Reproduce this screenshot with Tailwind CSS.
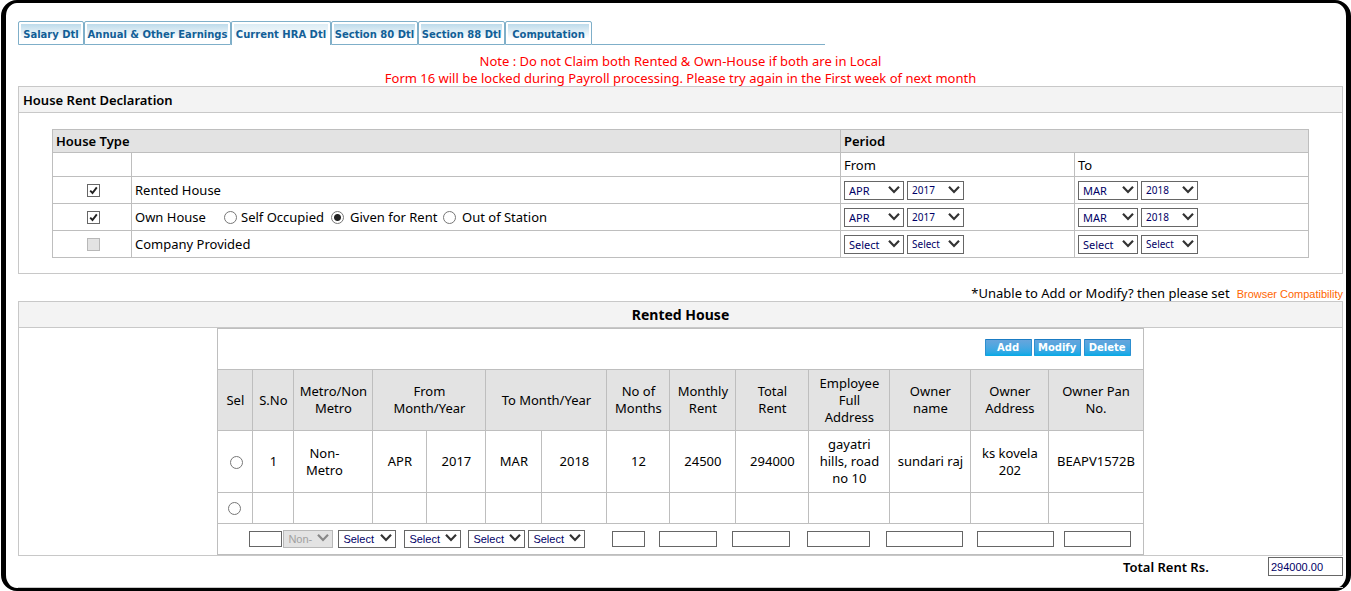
<!DOCTYPE html>
<html lang="en">
<head>
<meta charset="utf-8">
<meta name="viewport" content="width=device-width, initial-scale=1">
<title>House Rent Declaration</title>
<script src="https://cdn.jsdelivr.net/npm/@tailwindcss/browser@4"></script>
</head>
<body class="min-h-screen bg-white font-['Noto_Sans',sans-serif] text-[13px] leading-[17px] text-black">
<svg class="hidden">
  <symbol id="chev" viewBox="0 0 12 8"><path d="M1 0.8 6 6 11 0.8" fill="none" stroke="currentColor" stroke-width="2.2"/></symbol>
  <symbol id="tick" viewBox="0 0 9 9"><path d="M1.2 4.6 3.5 7 7.8 1.4" fill="none" stroke="currentColor" stroke-width="1.9"/></symbol>
</svg>
<main class="ml-px flex min-h-[591px] flex-col rounded-[16px] border-x-5 border-y-3 border-black pt-[18px] pr-[3px] pl-3">

  <nav class="flex h-6 w-[807px] font-['DejaVu_Sans',sans-serif] text-[10px] font-bold text-[#125f97]">
    <a href="#" class="flex w-[66px] items-center justify-center rounded-t-xs border border-[#7fafc9] bg-linear-to-b from-[#b4d6e8] to-white to-75% pt-0.5 whitespace-nowrap ring-2 ring-white ring-inset">Salary Dtl</a>
    <a href="#" class="flex w-[147px] items-center justify-center rounded-t-xs border border-[#7fafc9] bg-linear-to-b from-[#b4d6e8] to-white to-75% pt-0.5 whitespace-nowrap ring-2 ring-white ring-inset">Annual &amp; Other Earnings</a>
    <a href="#" aria-current="page" class="flex w-[100px] items-center justify-center rounded-t-xs border border-b-0 border-[#7fafc9] bg-linear-to-b from-[#d8eaf3] to-white to-75% pt-0.5 whitespace-nowrap ring-2 ring-white ring-inset">Current HRA Dtl</a>
    <a href="#" class="flex w-[87px] items-center justify-center rounded-t-xs border border-[#7fafc9] bg-linear-to-b from-[#b4d6e8] to-white to-75% pt-0.5 whitespace-nowrap ring-2 ring-white ring-inset">Section 80 Dtl</a>
    <a href="#" class="flex w-[87px] items-center justify-center rounded-t-xs border border-[#7fafc9] bg-linear-to-b from-[#b4d6e8] to-white to-75% pt-0.5 whitespace-nowrap ring-2 ring-white ring-inset">Section 88 Dtl</a>
    <a href="#" class="flex w-[87px] items-center justify-center rounded-t-xs border border-[#7fafc9] bg-linear-to-b from-[#b4d6e8] to-white to-75% pt-0.5 whitespace-nowrap ring-2 ring-white ring-inset">Computation</a>
    <span class="flex-1 border-b border-[#7fafc9]"></span>
  </nav>

  <div class="pt-2 text-center text-[#ff0000]">
    <p>Note : Do not Claim both Rented &amp; Own-House if both are in Local</p>
    <p class="-mb-px">Form 16 will be locked during Payroll processing. Please try again in the First week of next month</p>
  </div>

  <section class="border border-[#c8c8c8] pb-[15px]">
    <h2 class="h-[26px] border-b border-[#c8c8c8] bg-[#f3f3f3] pl-1 leading-[26px] font-semibold">House Rent Declaration</h2>
    <div class="px-[33px] pt-4">
      <table class="w-full table-fixed border-collapse text-left [&_td]:border [&_td]:border-[#bebebe] [&_td]:p-0 [&_td]:pl-[3px] [&_th]:border [&_th]:border-[#bebebe] [&_th]:p-0 [&_th]:pl-[3px]">
        <colgroup><col class="w-[79px]"><col><col class="w-[234px]"><col class="w-[234px]"></colgroup>
        <tr class="h-[23px] bg-[#e3e3e3]"><th colspan="2" class="font-semibold">House Type</th><th colspan="2" class="font-semibold">Period</th></tr>
        <tr class="h-6"><td></td><td></td><td><div class="pt-0.5">From</div></td><td><div class="pt-0.5">To</div></td></tr>
        <tr class="h-[27px]">
          <td class="pr-0.5"><span class="relative mx-auto block size-[13px]"><input id="rented" type="checkbox" checked class="block size-[13px] appearance-none border border-[#666] bg-white"><svg class="pointer-events-none absolute top-0.5 left-0.5 size-[9px] text-[#222]"><use href="#tick"/></svg></span></td>
          <td><label for="rented">Rented House</label></td>
          <td><div class="flex gap-[3px]">
            <span class="relative text-[#333]"><select aria-label="Rented from month" class="block h-[19px] w-[60px] appearance-none border border-[#666] bg-white pl-1 text-[11px] leading-[17px] text-[#000066]"><option>APR</option></select><svg class="pointer-events-none absolute top-[5px] right-1 h-2 w-3"><use href="#chev"/></svg></span>
            <span class="relative text-[#333]"><select aria-label="Rented from year" class="block h-[19px] w-[57px] appearance-none border border-[#666] bg-white pl-1 text-[10px] leading-[17px] text-[#000066]"><option>2017</option></select><svg class="pointer-events-none absolute top-[5px] right-1 h-2 w-3"><use href="#chev"/></svg></span></div></td>
          <td><div class="flex gap-[3px]">
            <span class="relative text-[#333]"><select aria-label="Rented to month" class="block h-[19px] w-[60px] appearance-none border border-[#666] bg-white pl-1 text-[11px] leading-[17px] text-[#000066]"><option>MAR</option></select><svg class="pointer-events-none absolute top-[5px] right-1 h-2 w-3"><use href="#chev"/></svg></span>
            <span class="relative text-[#333]"><select aria-label="Rented to year" class="block h-[19px] w-[57px] appearance-none border border-[#666] bg-white pl-1 text-[10px] leading-[17px] text-[#000066]"><option>2018</option></select><svg class="pointer-events-none absolute top-[5px] right-1 h-2 w-3"><use href="#chev"/></svg></span></div></td>
        </tr>
        <tr class="h-[27px]">
          <td><span class="relative mx-auto block size-[13px]"><input id="own" type="checkbox" checked class="block size-[13px] appearance-none border border-[#666] bg-white"><svg class="pointer-events-none absolute top-0.5 left-0.5 size-[9px] text-[#222]"><use href="#tick"/></svg></span></td>
          <td><div class="flex items-center">
            <label for="own" class="w-[89px]">Own House</label>
            <input id="self" name="own-use" type="radio" class="mr-1 size-[13px] appearance-none rounded-full border border-[#777] bg-white"><label for="self" class="w-[90px]">Self Occupied</label>
            <input id="given" name="own-use" type="radio" checked class="mr-1.5 size-[13px] appearance-none rounded-full border border-[#777] bg-[radial-gradient(circle,#222_3px,#fff_4px)]"><label for="given" class="w-[93px]">Given for Rent</label>
            <input id="out" name="own-use" type="radio" class="mr-1.5 size-[13px] appearance-none rounded-full border border-[#777] bg-white"><label for="out">Out of Station</label>
          </div></td>
          <td><div class="flex gap-[3px]">
            <span class="relative text-[#333]"><select aria-label="Own from month" class="block h-[19px] w-[60px] appearance-none border border-[#666] bg-white pl-1 text-[11px] leading-[17px] text-[#000066]"><option>APR</option></select><svg class="pointer-events-none absolute top-[5px] right-1 h-2 w-3"><use href="#chev"/></svg></span>
            <span class="relative text-[#333]"><select aria-label="Own from year" class="block h-[19px] w-[57px] appearance-none border border-[#666] bg-white pl-1 text-[10px] leading-[17px] text-[#000066]"><option>2017</option></select><svg class="pointer-events-none absolute top-[5px] right-1 h-2 w-3"><use href="#chev"/></svg></span></div></td>
          <td><div class="flex gap-[3px]">
            <span class="relative text-[#333]"><select aria-label="Own to month" class="block h-[19px] w-[60px] appearance-none border border-[#666] bg-white pl-1 text-[11px] leading-[17px] text-[#000066]"><option>MAR</option></select><svg class="pointer-events-none absolute top-[5px] right-1 h-2 w-3"><use href="#chev"/></svg></span>
            <span class="relative text-[#333]"><select aria-label="Own to year" class="block h-[19px] w-[57px] appearance-none border border-[#666] bg-white pl-1 text-[10px] leading-[17px] text-[#000066]"><option>2018</option></select><svg class="pointer-events-none absolute top-[5px] right-1 h-2 w-3"><use href="#chev"/></svg></span></div></td>
        </tr>
        <tr class="h-[27px]">
          <td><input id="company" type="checkbox" disabled class="mx-auto block size-[13px] appearance-none border border-[#b8b8b8] bg-[#e3e3e3]"></td>
          <td><label for="company">Company Provided</label></td>
          <td><div class="flex gap-[3px]">
            <span class="relative text-[#333]"><select aria-label="Company from month" class="block h-[19px] w-[60px] appearance-none border border-[#666] bg-white pl-1 text-[11px] leading-[17px] text-[#000066]"><option>Select</option></select><svg class="pointer-events-none absolute top-[5px] right-1 h-2 w-3"><use href="#chev"/></svg></span>
            <span class="relative text-[#333]"><select aria-label="Company from year" class="block h-[19px] w-[57px] appearance-none border border-[#666] bg-white pl-1 text-[10px] leading-[17px] text-[#000066]"><option>Select</option></select><svg class="pointer-events-none absolute top-[5px] right-1 h-2 w-3"><use href="#chev"/></svg></span></div></td>
          <td><div class="flex gap-[3px]">
            <span class="relative text-[#333]"><select aria-label="Company to month" class="block h-[19px] w-[60px] appearance-none border border-[#666] bg-white pl-1 text-[11px] leading-[17px] text-[#000066]"><option>Select</option></select><svg class="pointer-events-none absolute top-[5px] right-1 h-2 w-3"><use href="#chev"/></svg></span>
            <span class="relative text-[#333]"><select aria-label="Company to year" class="block h-[19px] w-[57px] appearance-none border border-[#666] bg-white pl-1 text-[10px] leading-[17px] text-[#000066]"><option>Select</option></select><svg class="pointer-events-none absolute top-[5px] right-1 h-2 w-3"><use href="#chev"/></svg></span></div></td>
        </tr>
      </table>
    </div>
  </section>

  <p class="-mb-0.5 flex items-baseline justify-end gap-[7px] pt-[11px]">*Unable to Add or Modify? then please set <a href="#" class="font-['Liberation_Sans',sans-serif] text-[11px] text-[#ff6600]">Browser Compatibility</a></p>

  <section class="border border-[#c8c8c8]">
    <h2 class="h-[26px] border-b border-[#c8c8c8] bg-[#f3f3f3] text-center text-[14px] leading-[26px] font-bold">Rented House</h2>
    <table class="mx-auto w-[925px] table-fixed border-collapse text-center [&_td]:border [&_td]:border-[#bebebe] [&_td]:p-0 [&_th]:border [&_th]:border-[#bebebe] [&_th]:p-0 [&_th]:font-normal">
      <colgroup><col class="w-[35px]"><col class="w-[41px]"><col class="w-[79px]"><col class="w-[54px]"><col class="w-[59px]"><col class="w-[56px]"><col class="w-[65px]"><col class="w-[63px]"><col class="w-[66px]"><col class="w-[73px]"><col class="w-[81px]"><col class="w-[81px]"><col class="w-[78px]"><col class="w-[94px]"></colgroup>
      <tr class="h-[41px]"><td colspan="14"><div class="flex justify-end gap-0.5 pr-3 pb-1 font-['DejaVu_Sans',sans-serif] text-[10px] font-bold text-white">
        <button class="h-[17px] w-[47px] rounded-[1px] border border-t-[#1a7cc4] border-r-[#2d8fd0] border-b-[#0aa9e4] border-l-[#2d8fd0] bg-linear-to-b from-[#66a5dc] to-[#0aa9e6] leading-[15px]">Add</button>
        <button class="h-[17px] w-[47px] rounded-[1px] border border-t-[#1a7cc4] border-r-[#2d8fd0] border-b-[#0aa9e4] border-l-[#2d8fd0] bg-linear-to-b from-[#66a5dc] to-[#0aa9e6] leading-[15px]">Modify</button>
        <button class="ml-px h-[17px] w-[47px] rounded-[1px] border border-t-[#1a7cc4] border-r-[#2d8fd0] border-b-[#0aa9e4] border-l-[#2d8fd0] bg-linear-to-b from-[#66a5dc] to-[#0aa9e6] leading-[15px]">Delete</button>
      </div></td></tr>
      <tr class="h-[61px] bg-[#e3e3e3]"><th>Sel</th><th>S.No</th><th>Metro/Non<br>Metro</th><th colspan="2">From<br>Month/Year</th><th colspan="2">To Month/Year</th><th>No of<br>Months</th><th>Monthly<br>Rent</th><th>Total<br>Rent</th><th>Employee<br>Full<br>Address</th><th>Owner<br>name</th><th>Owner<br>Address</th><th>Owner Pan<br>No.</th></tr>
      <tr class="h-[62px]"><td><input type="radio" name="sel" aria-label="Select row 1" class="ml-0.5 size-[13px] appearance-none rounded-full border border-[#777] align-middle"></td><td>1</td><td><div class="pr-[18px]">Non-<br>Metro</div></td><td>APR</td><td>2017</td><td>MAR</td><td>2018</td><td>12</td><td>24500</td><td>294000</td><td>gayatri<br>hills, road<br>no 10</td><td>sundari raj</td><td>ks kovela<br>202</td><td>BEAPV1572B</td></tr>
      <tr class="h-[31px]"><td><input type="radio" name="sel" aria-label="Select new row" class="mr-0.5 mb-0.5 size-[13px] appearance-none rounded-full border border-[#777] align-middle"></td><td></td><td></td><td></td><td></td><td></td><td></td><td></td><td></td><td></td><td></td><td></td><td></td><td></td></tr>
      <tr class="h-[31px]"><td colspan="14"><div class="flex items-center pl-[31px] font-['Liberation_Sans',sans-serif] text-[11px] text-[#000066]">
        <input aria-label="Serial number" class="h-4 w-[33px] border border-[#666]">
        <span class="relative ml-px text-[#888]"><select aria-label="Metro" disabled class="block h-[18px] w-[50px] appearance-none border border-[#b8b8b8] bg-[#e3e3e3] pl-1 text-[#a0a0a0] opacity-100"><option>Non-</option></select><svg class="pointer-events-none absolute top-1 right-1 h-2 w-3"><use href="#chev"/></svg></span>
        <span class="relative ml-[5px] text-[#333]"><select aria-label="From month" class="block h-[18px] w-[58px] appearance-none border border-[#666] pl-1 text-[#000066]"><option>Select</option></select><svg class="pointer-events-none absolute top-1 right-1 h-2 w-3"><use href="#chev"/></svg></span>
        <span class="relative ml-2 text-[#333]"><select aria-label="From year" class="block h-[18px] w-[57px] appearance-none border border-[#666] pl-1 text-[#000066]"><option>Select</option></select><svg class="pointer-events-none absolute top-1 right-1 h-2 w-3"><use href="#chev"/></svg></span>
        <span class="relative ml-[7px] text-[#333]"><select aria-label="To month" class="block h-[18px] w-[57px] appearance-none border border-[#666] pl-1 text-[#000066]"><option>Select</option></select><svg class="pointer-events-none absolute top-1 right-1 h-2 w-3"><use href="#chev"/></svg></span>
        <span class="relative ml-[3px] text-[#333]"><select aria-label="To year" class="block h-[18px] w-[57px] appearance-none border border-[#666] pl-1 text-[#000066]"><option>Select</option></select><svg class="pointer-events-none absolute top-1 right-1 h-2 w-3"><use href="#chev"/></svg></span>
        <input aria-label="No of months" class="ml-[27px] h-4 w-[33px] border border-[#666]">
        <input aria-label="Monthly rent" class="ml-[14px] h-4 w-[58px] border border-[#666]">
        <input aria-label="Total rent" class="ml-[15px] h-4 w-[58px] border border-[#666]">
        <input aria-label="Employee full address" class="ml-[17px] h-4 w-[63px] border border-[#666]">
        <input aria-label="Owner name" class="ml-4 h-4 w-[77px] border border-[#666]">
        <input aria-label="Owner address" class="ml-[14px] h-4 w-[77px] border border-[#666]">
        <input aria-label="Owner PAN" class="ml-[10px] h-4 w-[67px] border border-[#666]">
      </div></td></tr>
    </table>
  </section>

  <div class="flex flex-1 items-start justify-end border-b border-[#c8c8c8] pt-px">
    <label for="total" class="w-[145px] pt-0.5 font-semibold">Total Rent Rs.</label>
    <input id="total" value="294000.00" class="h-[19px] w-[75px] border border-[#666] pl-0.5 font-['Liberation_Sans',sans-serif] text-[11px] text-[#000066]">
  </div>
</main>
</body>
</html>
